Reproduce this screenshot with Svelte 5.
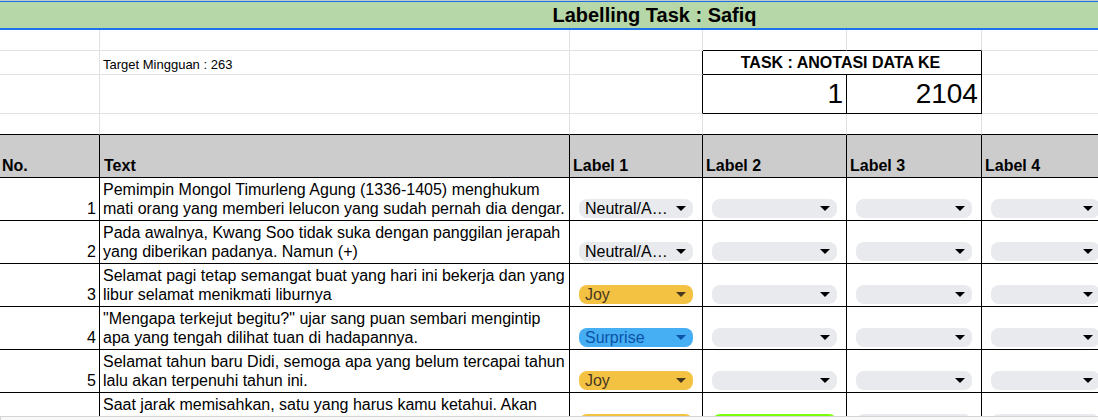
<script>
  const labels = ['Label 1', 'Label 2', 'Label 3', 'Label 4'];
  const options = ['', 'Neutral/A…', 'Joy', 'Surprise', 'Trust'];
  const tones = { Joy: 'joy', Surprise: 'surprise', Trust: 'trust' };

  let rows = $state([
    { no: '1', text: 'Pemimpin Mongol Timurleng Agung (1336-1405) menghukum mati orang yang memberi lelucon yang sudah pernah dia dengar.', picks: ['Neutral/A…', '', '', ''] },
    { no: '2', text: 'Pada awalnya, Kwang Soo tidak suka dengan panggilan jerapah yang diberikan padanya. Namun (+)', picks: ['Neutral/A…', '', '', ''] },
    { no: '3', text: 'Selamat pagi tetap semangat buat yang hari ini bekerja dan yang libur selamat menikmati liburnya', picks: ['Joy', '', '', ''] },
    { no: '4', text: '"Mengapa terkejut begitu?" ujar sang puan sembari mengintip apa yang tengah dilihat tuan di hadapannya.', picks: ['Surprise', '', '', ''] },
    { no: '5', text: 'Selamat tahun baru Didi, semoga apa yang belum tercapai tahun lalu akan terpenuhi tahun ini.', picks: ['Joy', '', '', ''] },
    { no: '', text: 'Saat jarak memisahkan, satu yang harus kamu ketahui. Akan', picks: ['Joy', 'Trust', '', ''] }
  ]);
</script>

<main>
  <div class="sheet">
    <table>
      <colgroup>
        <col class="c-no" />
        <col />
        <col class="c-l1" />
        <col class="c-l2" />
        <col class="c-l3" />
        <col class="c-l4" />
        <col class="c-rest" />
      </colgroup>
      <thead>
        <tr class="title"><th colspan="7">Labelling Task : Safiq</th></tr>
        <tr class="thin">
          <td></td><td></td><td></td><td class="under"></td><td class="under"></td><td></td>
        </tr>
        <tr class="info">
          <td></td>
          <td class="target">Target Mingguan : 263</td>
          <td class="side"></td>
          <th class="task" colspan="2">TASK : ANOTASI DATA KE</th>
          <td></td>
        </tr>
        <tr class="range">
          <td></td><td></td><td class="side"></td>
          <td class="big">1</td>
          <td class="big">2104</td>
          <td></td>
        </tr>
        <tr class="thin last">
          <td></td><td></td><td></td><td></td><td></td><td></td>
        </tr>
        <tr class="heads">
          <th scope="col" class="first">No.</th>
          <th scope="col">Text</th>
          {#each labels as label}
            <th scope="col" class="label">{label}</th>
          {/each}
        </tr>
      </thead>
      <tbody>
        {#each rows as row}
          <tr>
            <td class="no">{row.no}</td>
            <td class="text">{row.text}</td>
            {#each labels as label, i}
              <td class="pick">
                <div class="chip {tones[row.picks[i]] ?? ''}">
                  <select aria-label={label} bind:value={row.picks[i]}>
                    {#each options as option}
                      <option value={option}>{option}</option>
                    {/each}
                  </select>
                  <svg viewBox="0 0 10 5" width="10" height="5" aria-hidden="true">
                    <path d="M0 0H10L5 5Z" fill="currentColor" />
                  </svg>
                </div>
              </td>
            {/each}
          </tr>
        {/each}
      </tbody>
    </table>
  </div>
  <footer></footer>
</main>

<style>
  main {
    height: 100vh;
    display: flex;
    flex-direction: column;
    background: #fff;
    color: #000;
    font-family: 'Liberation Sans', Arial, sans-serif;
    font-size: 16px;
    line-height: 19px;
  }
  .sheet {
    flex: 1;
    min-height: 0;
    overflow: hidden;
    border-top: 1px solid #c4c7c5;
  }
  footer {
    height: 3px;
    border-top: 1px solid #d5d5d5;
    border-left: 1px solid #d5d5d5;
    background: #f8f8f8;
  }
  /* The grid runs past the right edge of the viewport. */
  table {
    width: calc(100% + 212px);
    table-layout: fixed;
    border-collapse: separate;
    border-spacing: 0;
  }
  .c-no { width: 100px; }
  .c-l1 { width: 133px; }
  .c-l2 { width: 144px; }
  .c-l3 { width: 135px; }
  .c-l4 { width: 128px; }
  .c-rest { width: 200px; }

  th, td {
    box-sizing: border-box;
    padding: 0 3px;
    border: 0 solid #e1e1e1;
    border-right-width: 1px;
    border-bottom-width: 1px;
    text-align: left;
    vertical-align: bottom;
  }
  .title th {
    height: 29px;
    padding: 0;
    border-top: 1px solid #1a73e8;
    border-bottom: 2px solid #1a73e8;
    background: #b6d7a8;
    font-size: 20px;
    text-align: center;
    vertical-align: middle;
  }
  .thin td { height: 21px; }
  .thin .under { border-bottom-color: #000; }
  .thin.last td { border-bottom-color: #000; }
  .info td, .info th { height: 24px; }
  .target {
    font-size: 13px;
  }
  .side { border-right-color: #000; }
  .info .task {
    padding-right: 6px;
    border-color: #000;
    text-align: center;
    vertical-align: middle;
  }
  .range td { height: 39px; }
  .range .big {
    border-color: #000;
    font-size: 28px;
    line-height: 38px;
    text-align: right;
  }
  .heads th {
    height: 43px;
    padding: 0 4px 2px;
    border-color: #000;
    background: #ccc;
  }
  .heads .first { padding-left: 2px; }
  .heads .label { padding-left: 3px; }

  tbody td {
    height: 43px;
    border-color: #000;
  }
  .no {
    padding-bottom: 2px;
    text-align: right;
  }
  .text {
    padding-top: 2px;
    vertical-align: top;
  }
  .pick { padding: 0 9px 2px; }
  .chip {
    display: flex;
    align-items: center;
    height: 19px;
    padding-right: 7px;
    border-radius: 8px;
    background: #e8eaed;
  }
  .joy { background: #f4c242; color: #473822; }
  .surprise { background: #46aef2; color: #0a53a8; }
  .trust { background: #7cff0a; }
  select {
    flex: 1;
    min-width: 0;
    height: 19px;
    padding: 0 0 0 6px;
    border: 0;
    background: transparent;
    color: inherit;
    font: inherit;
    appearance: none;
    outline: 0;
  }
  svg { flex: none; }
</style>
